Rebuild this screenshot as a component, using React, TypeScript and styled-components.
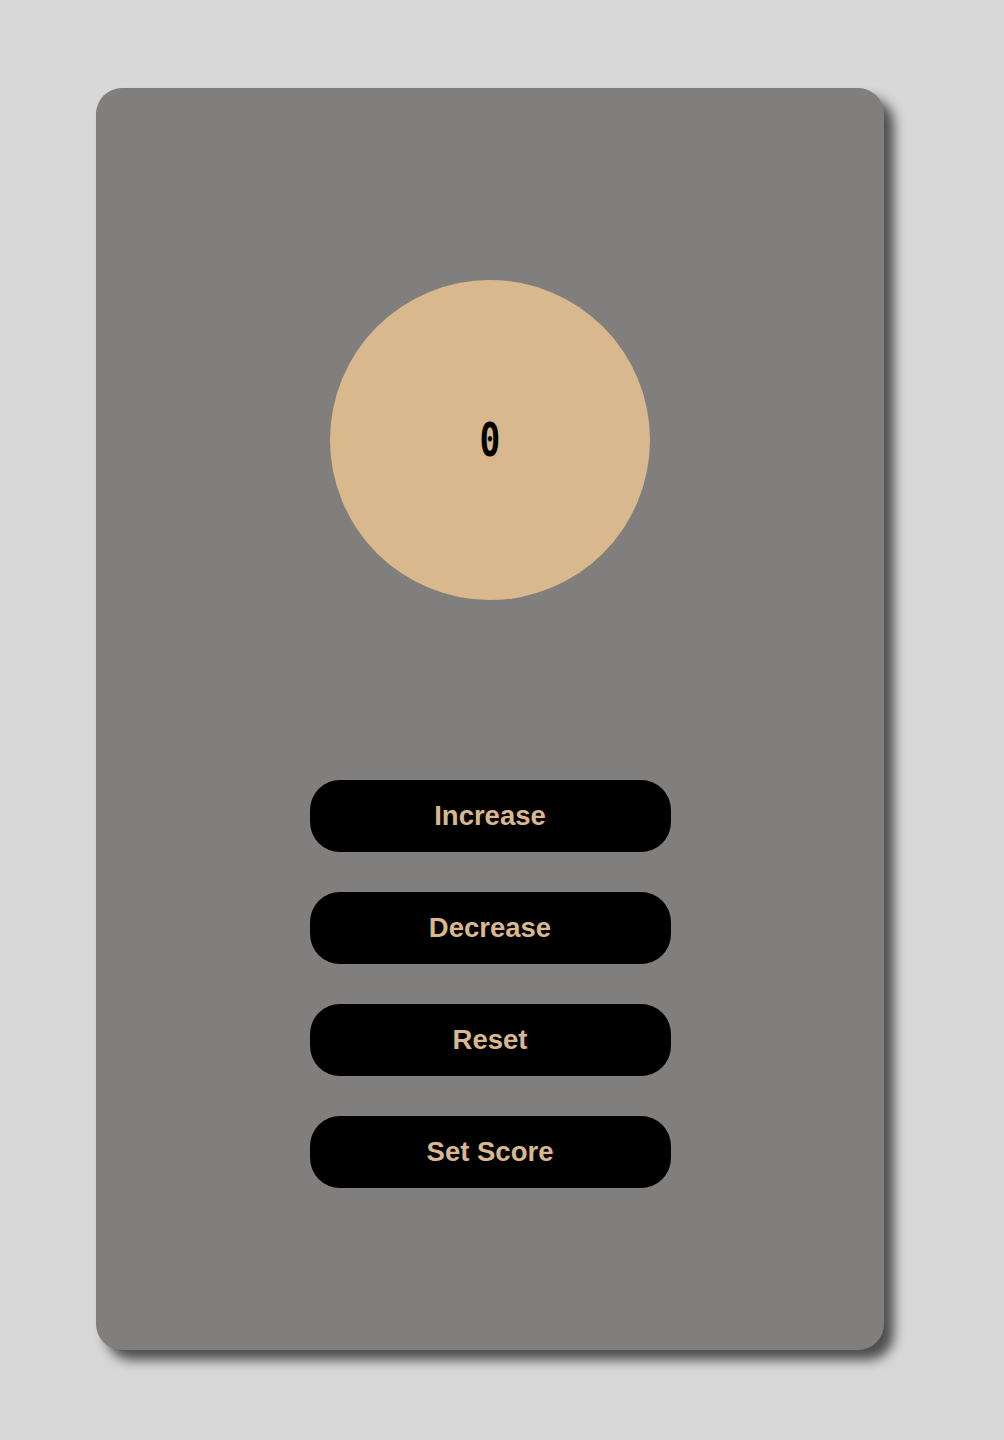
import styled, { createGlobalStyle } from "styled-components";

const GlobalStyle = createGlobalStyle`
  html, body {
    margin: 0;
    padding: 0;
    background: #d8d8d8;
    font-family: "Liberation Sans", Arial, sans-serif;
  }
`;

const Page = styled.div`
  padding: 88px 0 90px 96px;
`;

const Card = styled.div`
  width: 788px;
  height: 1262px;
  box-sizing: border-box;
  background: #807f7e;
  border-radius: 26px;
  box-shadow: 10px 10px 12px #4e4e4e;
  display: flex;
  flex-direction: column;
  align-items: center;
  padding-top: 192px;
`;

const Score = styled.div`
  width: 320px;
  height: 320px;
  border-radius: 50%;
  background: #d8b88c;
  display: flex;
  align-items: center;
  justify-content: center;
  margin-bottom: 180px;
`;

const Digit = styled.span`
  font-family: "DejaVu Sans Mono", monospace;
  font-size: 46px;
  font-weight: bold;
  color: #000;
  transform: scaleX(0.75);
  line-height: 1;
`;

const Buttons = styled.div`
  display: flex;
  flex-direction: column;
  gap: 40px;
`;

const Button = styled.button`
  width: 361px;
  height: 72px;
  border: none;
  border-radius: 30px;
  background: #000;
  color: #d8b88c;
  font-family: "Liberation Sans", Arial, sans-serif;
  font-weight: bold;
  font-size: 27.5px;
  cursor: pointer;
`;

export default function App() {
  return (
    <Page>
      <GlobalStyle />
      <Card>
        <Score>
          <Digit>0</Digit>
        </Score>
        <Buttons>
          <Button>Increase</Button>
          <Button>Decrease</Button>
          <Button>Reset</Button>
          <Button>Set Score</Button>
        </Buttons>
      </Card>
    </Page>
  );
}
